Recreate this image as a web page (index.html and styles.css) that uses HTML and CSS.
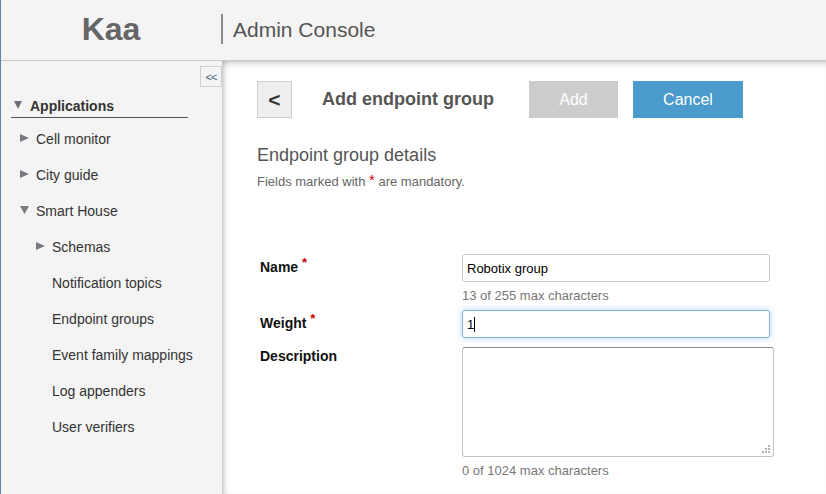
FILE: index.html
```html
<!DOCTYPE html>
<html>
<head>
<meta charset="utf-8">
<title>Kaa Admin Console</title>
<link rel="stylesheet" href="styles.css">
</head>
<body>
<div class="app">
  <header class="topbar">
    <div class="logo">Kaa</div>
    <div class="divider"></div>
    <div class="console">Admin Console</div>
  </header>
  <div class="main">
    <aside class="sidebar">
      <div class="collapse-row"><button class="collapse">&lt;&lt;</button></div>
      <div class="apps-head">
        <svg class="tri-down-lg" width="8" height="8" viewBox="0 0 8 8"><polygon points="0,0 8,0 4,8"/></svg>
        <span>Applications</span>
      </div>
      <ul class="nav">
        <li class="lvl1"><svg class="tri" width="9" height="8" viewBox="0 0 9 8"><polygon points="0,0 9,4 0,8"/></svg><span>Cell monitor</span></li>
        <li class="lvl1"><svg class="tri" width="9" height="8" viewBox="0 0 9 8"><polygon points="0,0 9,4 0,8"/></svg><span>City guide</span></li>
        <li class="lvl1"><svg class="tri" width="9" height="8" viewBox="0 0 9 8"><polygon points="0,0 9,0 4.5,8"/></svg><span>Smart House</span></li>
        <li class="lvl2"><svg class="tri" width="9" height="8" viewBox="0 0 9 8"><polygon points="0,0 9,4 0,8"/></svg><span>Schemas</span></li>
        <li class="lvl3"><span>Notification topics</span></li>
        <li class="lvl3"><span>Endpoint groups</span></li>
        <li class="lvl3"><span>Event family mappings</span></li>
        <li class="lvl3"><span>Log appenders</span></li>
        <li class="lvl3"><span>User verifiers</span></li>
      </ul>
    </aside>
    <main class="content">
      <div class="title-row">
        <button class="back">&lt;</button>
        <h1 class="title">Add endpoint group</h1>
        <button class="btn btn-add">Add</button>
        <button class="btn btn-cancel">Cancel</button>
      </div>
      <h2 class="section">Endpoint group details</h2>
      <p class="hint">Fields marked with <span class="req">*</span> are mandatory.</p>
      <div class="form">
        <div class="row">
          <label class="label">Name <span class="req">*</span></label>
          <div class="field">
            <div class="input">Robotix group</div>
            <div class="help">13 of 255 max characters</div>
          </div>
        </div>
        <div class="row">
          <label class="label">Weight <span class="req">*</span></label>
          <div class="field">
            <div class="input focused">1<span class="caret"></span></div>
          </div>
        </div>
        <div class="row row-desc">
          <label class="label label-desc">Description</label>
          <div class="field">
            <div class="textarea">
              <svg class="grip" width="9" height="9" viewBox="0 0 9 9"><rect x="6" y="0" width="2" height="2"/><rect x="3" y="3" width="2" height="2"/><rect x="6" y="3" width="2" height="2"/><rect x="0" y="6" width="2" height="2"/><rect x="3" y="6" width="2" height="2"/><rect x="6" y="6" width="2" height="2"/></svg>
            </div>
            <div class="help">0 of 1024 max characters</div>
          </div>
        </div>
      </div>
    </main>
  </div>
</div>
</body>
</html>
```
FILE: styles.css
```css
* { box-sizing: border-box; }
html, body { margin: 0; padding: 0; }
body {
  font-family: "Liberation Sans", Arial, sans-serif;
  background: #fff;
  width: 826px;
  height: 494px;
  overflow: hidden;
}
.app {
  display: flex;
  flex-direction: column;
  height: 494px;
  border-left: 1px solid #5f82ab;
}
.topbar {
  height: 61px;
  background: #f4f4f4;
  border-bottom: 1px solid #c9c9c9;
  display: flex;
  align-items: center;
  flex-shrink: 0;
}
.logo {
  width: 220px;
  text-align: center;
  font-size: 32px;
  font-weight: bold;
  color: #666;
  padding-bottom: 2px;
}
.divider {
  width: 2px;
  height: 30px;
  background: #8a8a8a;
  margin-top: -2px;
}
.console {
  margin-left: 10px;
  font-size: 21px;
  color: #555;
  padding-bottom: 1px;
}
.main {
  flex: 1;
  display: flex;
  min-height: 0;
}
.sidebar {
  width: 221px;
  background: #f4f4f4;
  flex-shrink: 0;
}
.collapse-row {
  display: flex;
  justify-content: flex-end;
  padding-top: 5px;
}
.collapse {
  width: 22px;
  height: 21px;
  padding: 0;
  border: 1px solid #cfcfcf;
  background: #f4f4f4;
  font-family: "Liberation Sans", Arial, sans-serif;
  font-size: 11px;
  color: #3d5a80;
  letter-spacing: -1px;
  line-height: 18px;
}
.apps-head {
  margin-left: 10px;
  width: 177px;
  padding-top: 9px;
  padding-bottom: 1px;
  line-height: 20px;
  border-bottom: 1px solid #555;
  display: flex;
  align-items: center;
  font-size: 14px;
  font-weight: bold;
  color: #333;
}
.tri-down-lg { fill: #6a6f78; margin-left: 3px; margin-right: 8px; margin-top: -3px; }
.nav {
  list-style: none;
  margin: 3px 0 0;
  padding: 0;
}
.nav li {
  height: 36px;
  display: flex;
  align-items: center;
  font-size: 14px;
  color: #333;
}
.nav .tri { fill: #777b84; margin-right: 7px; margin-top: -3px; }
.nav .lvl1 { padding-left: 19px; }
.nav .lvl2 { padding-left: 35px; }
.nav .lvl3 { padding-left: 51px; }
.content {
  flex: 1;
  background: #fff;
  padding: 20px 0 0 35px;
  box-shadow: inset 0 7px 7px -6px rgba(0,0,0,0.28), inset 7px 0 7px -6px rgba(0,0,0,0.3);
}
.title-row {
  display: flex;
  align-items: center;
  height: 37px;
}
.back {
  width: 35px;
  height: 37px;
  padding: 0;
  background: #eee;
  border: 1px solid #ccc;
  font-family: "Liberation Sans", Arial, sans-serif;
  font-size: 21px;
  font-weight: bold;
  color: #333;
}
.title {
  margin: 0 35px 0 30px;
  font-size: 18px;
  font-weight: bold;
  color: #555;
  width: 172px;
  white-space: nowrap;
}
.btn {
  height: 37px;
  border: none;
  font-family: "Liberation Sans", Arial, sans-serif;
  font-size: 16px;
  color: #fff;
  padding: 0;
}
.btn-add { width: 89px; background: #cccccc; margin-right: 15px; }
.btn-cancel { width: 110px; background: #4a9acc; }
.section {
  margin: 26px 0 0;
  font-size: 18px;
  font-weight: normal;
  color: #555;
  line-height: 22px;
}
.hint {
  margin: 8px 0 0;
  font-size: 13px;
  color: #666;
  line-height: 16px;
}
.req { color: #cc0000; vertical-align: top; line-height: 12px; }
.hint .req { font-size: 15px; }
.form { margin-top: 64px; }
.row {
  display: flex;
  margin-bottom: 10px;
}
.label {
  width: 202px;
  margin-left: 3px;
  padding-top: 5px;
  font-size: 14px;
  font-weight: bold;
  color: #111;
  line-height: 17px;
}
.label .req { font-size: 13px; line-height: 8px; }
.label-desc { padding-top: 1px; }
.field { width: 312px; }
.input {
  width: 308px;
  height: 28px;
  border: 1px solid #cccccc;
  border-radius: 3px;
  padding: 2px 4px 0;
  font-size: 13px;
  line-height: 24px;
  color: #000;
  background: #fff;
}
.focused {
  border-color: #7fb5e6;
  box-shadow: 0 0 6px rgba(102,175,233,0.55);
}
.caret {
  display: inline-block;
  width: 1px;
  height: 15px;
  background: #000;
  vertical-align: -3px;
}
.help {
  margin-top: 6px;
  margin-bottom: 6px;
  font-size: 13px;
  line-height: 16px;
  color: #777;
}
.row:first-child { margin-bottom: 0; }
.row-desc { margin-top: -1px; }
.textarea {
  position: relative;
  width: 312px;
  height: 110px;
  border: 1px solid #c4c4c4;
  border-top-color: #8c8c8c;
  border-radius: 3px;
  background: #fff;
}
.grip {
  position: absolute;
  right: 2px;
  bottom: 2px;
  fill: #b5b5b5;
}
.row-desc .help { margin-top: 6px; }
```
